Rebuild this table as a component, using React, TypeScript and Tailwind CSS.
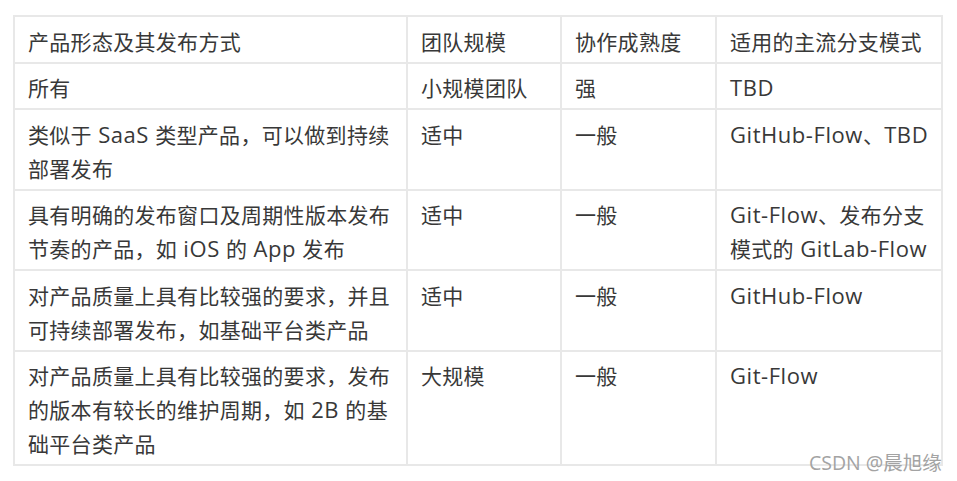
import React from "react";

const rows: string[][][] = [
  [["产品形态及其发布方式"], ["团队规模"], ["协作成熟度"], ["适用的主流分支模式"]],
  [["所有"], ["小规模团队"], ["强"], ["TBD"]],
  [["类似于 SaaS 类型产品，可以做到持续", "部署发布"], ["适中"], ["一般"], ["GitHub-Flow、TBD"]],
  [["具有明确的发布窗口及周期性版本发布", "节奏的产品，如 iOS 的 App 发布"], ["适中"], ["一般"], ["Git-Flow、发布分支", "模式的 GitLab-Flow"]],
  [["对产品质量上具有比较强的要求，并且", "可持续部署发布，如基础平台类产品"], ["适中"], ["一般"], ["GitHub-Flow"]],
  [["对产品质量上具有比较强的要求，发布", "的版本有较长的维护周期，如 2B 的基", "础平台类产品"], ["大规模"], ["一般"], ["Git-Flow"]],
];

const widths = ["w-[393px]", "w-[154px]", "w-[155px]", "w-[226px]"];

function Line({ text }: { text: string }) {
  const parts = text.split(/([\x20-\x7e]+)/).filter((p) => p.length > 0);
  return (
    <div>
      {parts.map((p, i) =>
        /^[\x20-\x7e]+$/.test(p) ? (
          <span key={i} className="text-[22px] leading-none tracking-[0.55px]">
            {p}
          </span>
        ) : (
          <span key={i} className="leading-none">{p}</span>
        )
      )}
    </div>
  );
}

export default function App() {
  return (
    <div
      className="relative w-[957px] h-[481px] bg-white pt-[15px] pl-[13px]"
      style={{ fontFamily: '"Open Sans", "Noto Sans CJK SC", sans-serif' }}
    >
      <table className="border-collapse table-fixed text-[21px] leading-[34px] text-[#383838]">
        <tbody>
          {rows.map((r, i) => (
            <tr key={i}>
              {r.map((c, j) => (
                <td
                  key={j}
                  className={`${widths[j]} border-2 border-[#e8e8e8] align-top px-[13px] pt-[7.5px] pb-[3px] whitespace-nowrap tracking-[0.3px]`}
                >
                  {c.map((l, k) => (
                    <Line key={k} text={l} />
                  ))}
                </td>
              ))}
            </tr>
          ))}
        </tbody>
      </table>
      <div className="absolute left-[809px] top-[450px] text-[19.5px] leading-[26px] text-[#a3a3a3] whitespace-nowrap">
        CSDN @晨旭缘
      </div>
    </div>
  );
}
